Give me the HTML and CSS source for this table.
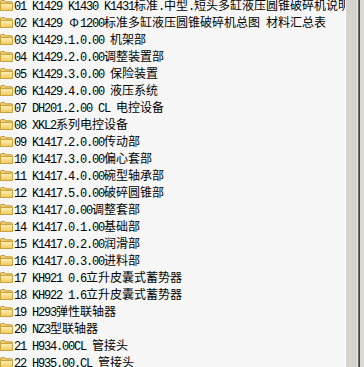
FILE: index.html
```html
<!DOCTYPE html>
<html>
<head>
<meta charset="utf-8">
<link rel="stylesheet" href="styles.css">
</head>
<body>
<div class="window">
  <div class="list">
    <div class="row"><svg class="folder" viewBox="0 0 13 11"><use href="#f"/></svg><span class="t">01 K1429 K1430 K1431<span class="c">标准</span>.<span class="c">中型</span>.<span class="c">短头多缸液压圆锥破碎机说明</span></span></div>
    <div class="row"><svg class="folder" viewBox="0 0 13 11"><use href="#f"/></svg><span class="t">02 K1429 <span class="w">Φ</span>1200<span class="c">标准多缸液压圆锥破碎机总图</span> <span class="c">材料汇总表</span></span></div>
    <div class="row"><svg class="folder" viewBox="0 0 13 11"><use href="#f"/></svg><span class="t">03 K1429.1.0.00 <span class="c">机架部</span></span></div>
    <div class="row"><svg class="folder" viewBox="0 0 13 11"><use href="#f"/></svg><span class="t">04 K1429.2.0.00<span class="c">调整装置部</span></span></div>
    <div class="row"><svg class="folder" viewBox="0 0 13 11"><use href="#f"/></svg><span class="t">05 K1429.3.0.00 <span class="c">保险装置</span></span></div>
    <div class="row"><svg class="folder" viewBox="0 0 13 11"><use href="#f"/></svg><span class="t">06 K1429.4.0.00 <span class="c">液压系统</span></span></div>
    <div class="row"><svg class="folder" viewBox="0 0 13 11"><use href="#f"/></svg><span class="t">07 DH201.2.00 CL <span class="c">电控设备</span></span></div>
    <div class="row"><svg class="folder" viewBox="0 0 13 11"><use href="#f"/></svg><span class="t">08 XKL2<span class="c">系列电控设备</span></span></div>
    <div class="row"><svg class="folder" viewBox="0 0 13 11"><use href="#f"/></svg><span class="t">09 K1417.2.0.00<span class="c">传动部</span></span></div>
    <div class="row"><svg class="folder" viewBox="0 0 13 11"><use href="#f"/></svg><span class="t">10 K1417.3.0.00<span class="c">偏心套部</span></span></div>
    <div class="row"><svg class="folder" viewBox="0 0 13 11"><use href="#f"/></svg><span class="t">11 K1417.4.0.00<span class="c">碗型轴承部</span></span></div>
    <div class="row"><svg class="folder" viewBox="0 0 13 11"><use href="#f"/></svg><span class="t">12 K1417.5.0.00<span class="c">破碎圆锥部</span></span></div>
    <div class="row"><svg class="folder" viewBox="0 0 13 11"><use href="#f"/></svg><span class="t">13 K1417.0.00<span class="c">调整套部</span></span></div>
    <div class="row"><svg class="folder" viewBox="0 0 13 11"><use href="#f"/></svg><span class="t">14 K1417.0.1.00<span class="c">基础部</span></span></div>
    <div class="row"><svg class="folder" viewBox="0 0 13 11"><use href="#f"/></svg><span class="t">15 K1417.0.2.00<span class="c">润滑部</span></span></div>
    <div class="row"><svg class="folder" viewBox="0 0 13 11"><use href="#f"/></svg><span class="t">16 K1417.0.3.00<span class="c">进料部</span></span></div>
    <div class="row"><svg class="folder" viewBox="0 0 13 11"><use href="#f"/></svg><span class="t">17 KH921 0.6<span class="c">立升皮囊式蓄势器</span></span></div>
    <div class="row"><svg class="folder" viewBox="0 0 13 11"><use href="#f"/></svg><span class="t">18 KH922 1.6<span class="c">立升皮囊式蓄势器</span></span></div>
    <div class="row"><svg class="folder" viewBox="0 0 13 11"><use href="#f"/></svg><span class="t">19 H293<span class="c">弹性联轴器</span></span></div>
    <div class="row"><svg class="folder" viewBox="0 0 13 11"><use href="#f"/></svg><span class="t">20 NZ3<span class="c">型联轴器</span></span></div>
    <div class="row"><svg class="folder" viewBox="0 0 13 11"><use href="#f"/></svg><span class="t">21 H934.00CL <span class="c">管接头</span></span></div>
    <div class="row"><svg class="folder" viewBox="0 0 13 11"><use href="#f"/></svg><span class="t">22 H935.00.CL <span class="c">管接头</span></span></div>
  </div>
  <div class="scrollbar"></div>
</div>
<svg class="defs" width="0" height="0">
  <defs>
    <linearGradient id="gb" x1="0" y1="0" x2="0" y2="1">
      <stop offset="0" stop-color="#f3d27a"/>
      <stop offset="1" stop-color="#dcae3e"/>
    </linearGradient>
    <linearGradient id="gf" x1="0" y1="0" x2="0" y2="1">
      <stop offset="0" stop-color="#fff1b8"/>
      <stop offset="1" stop-color="#f1c95c"/>
    </linearGradient>
    <g id="f">
      <path d="M0.5 10.5 V1.5 Q0.5 0.5 1.5 0.5 H4.5 L5.5 1.8 H11.5 Q12.5 1.8 12.5 2.8 V10.5 Z" fill="url(#gb)" stroke="#c49a34" stroke-width="1"/>
      <path d="M0.5 10.5 V4.2 Q0.5 3.5 1.3 3.5 H11.7 Q12.5 3.5 12.5 4.2 V10.5 Z" fill="url(#gf)" stroke="#c9a43e" stroke-width="1"/>
    </g>
  </defs>
</svg>
</body>
</html>
```
FILE: styles.css
```css
html, body {
  margin: 0;
  padding: 0;
  height: 100%;
  overflow: hidden;
}
body {
  background: #f7f7f7;
}
.window {
  display: flex;
  height: 367px;
  width: 364px;
}
.list {
  flex: 1;
  overflow: hidden;
  margin-top: -3px;
  background: #f7f7f7;
}
.row {
  height: 17px;
  display: flex;
  align-items: center;
  white-space: nowrap;
}
.folder {
  width: 13px;
  height: 11px;
  flex: none;
  margin-right: 1px;
}
.t {
  font-family: "Liberation Mono", monospace;
  font-size: 12px;
  letter-spacing: -1.2px;
  color: #000;
  line-height: 17px;
}
.c {
  font-family: "Noto Sans CJK SC", sans-serif;
  font-size: 12px;
  letter-spacing: 0;
}
.w {
  display: inline-block;
  width: 12px;
  text-align: center;
  letter-spacing: 0;
  font-family: "Noto Sans CJK SC", sans-serif;
  font-size: 12px;
}
.scrollbar {
  width: 19px;
  flex: none;
  background: linear-gradient(to right, #ffffff 0 1px, #d6d3ce 1px 12px, #e8e6e2 12px 13px, #6a6a6a 13px 14px, #404040 14px 15px, #dcd9d4 15px);
}
.defs {
  position: absolute;
  width: 0;
  height: 0;
}
```
